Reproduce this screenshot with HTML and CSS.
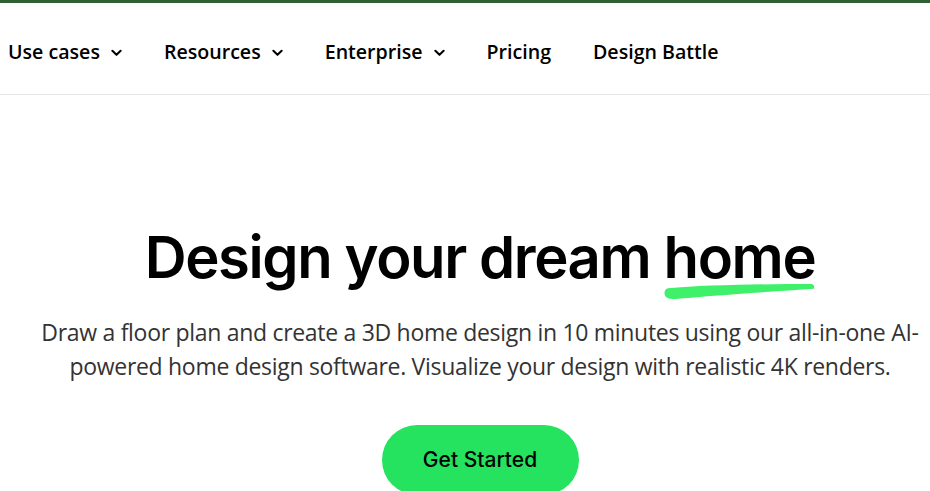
FILE: index.html
```html
<!DOCTYPE html>
<html lang="en">
<head>
  <meta charset="UTF-8">
  <title>Design your dream home</title>
  <meta name="viewport" content="width=device-width, initial-scale=1.0">
  <link rel="stylesheet" href="styles.css">
</head>
<body>
  <div class="topline"></div>
  <header>
    <nav>
      <a class="drop" href="#">Use cases <svg viewBox="0 0 12 8"><path d="M1.5 1.5 6 6l4.5-4.5"/></svg></a>
      <a class="drop" href="#">Resources <svg viewBox="0 0 12 8"><path d="M1.5 1.5 6 6l4.5-4.5"/></svg></a>
      <a class="drop" href="#">Enterprise <svg viewBox="0 0 12 8"><path d="M1.5 1.5 6 6l4.5-4.5"/></svg></a>
      <a href="#">Pricing</a>
      <a href="#">Design Battle</a>
    </nav>
  </header>

  <section class="hero">
    <h1>Design your dream <span class="mark">home<svg class="brush" viewBox="0 0 150 14" preserveAspectRatio="none"><path d="M4 4 C40 1 100 0 147 0 Q150 1 149 4.5 C120 6.5 80 8.5 50 11 C30 12.5 15 14 8 14 Q0 13.5 0.5 8 Q1 4.5 4 4Z"/></svg></span></h1>
    <p class="lead">Draw a floor plan and create a 3D home design in 10 minutes using our all-in-one AI-powered home design software. Visualize your design with realistic 4K renders.</p>
    <a class="cta" href="#">Get Started</a>
  </section>
</body>
</html>
```

FILE: styles.css
```css
body {
  margin: 0;
  background: #fff;
  color: #000;
  font-family: "Open Sans", sans-serif;
  overflow: hidden;
}
.topline {
  height: 3px;
  background: #2f5f35;
}
header {
  border-bottom: 1px solid #e6e6e6;
}
nav {
  display: flex;
  align-items: center;
  gap: 42px;
  height: 85px;
  padding: 6px 0 0 8px;
}
nav a {
  color: #000;
  text-decoration: none;
  font-size: 19.6px;
  font-weight: 600;
  display: flex;
  align-items: center;
  gap: 11px;
}
nav svg {
  width: 11px;
  height: 8px;
  fill: none;
  stroke: #000;
  stroke-width: 2.2;
  stroke-linecap: round;
  stroke-linejoin: round;
  margin-top: 2px;
}
.hero {
  width: 960px;
  text-align: center;
  padding-top: 126px;
}
h1 {
  margin: 0;
  font-family: "Inter", sans-serif;
  font-weight: 600;
  font-size: 58px;
  line-height: 72px;
  letter-spacing: -1.4px;
}
.mark {
  position: relative;
  display: inline-block;
}
.brush {
  position: absolute;
  left: 0;
  top: 63px;
  width: 151px;
  height: 15px;
  fill: #3ef06a;
}
.lead {
  max-width: 885px;
  margin: 22px auto 0;
  font-size: 23px;
  line-height: 34px;
  color: #333;
  letter-spacing: -0.3px;
}
.cta {
  display: inline-block;
  margin-top: 42px;
  background: #25e25f;
  color: #000;
  text-decoration: none;
  font-family: "Inter", sans-serif;
  font-size: 21px;
  font-weight: 500;
  width: 197px;
  height: 70px;
  line-height: 70px;
  border-radius: 35px;
}
```
